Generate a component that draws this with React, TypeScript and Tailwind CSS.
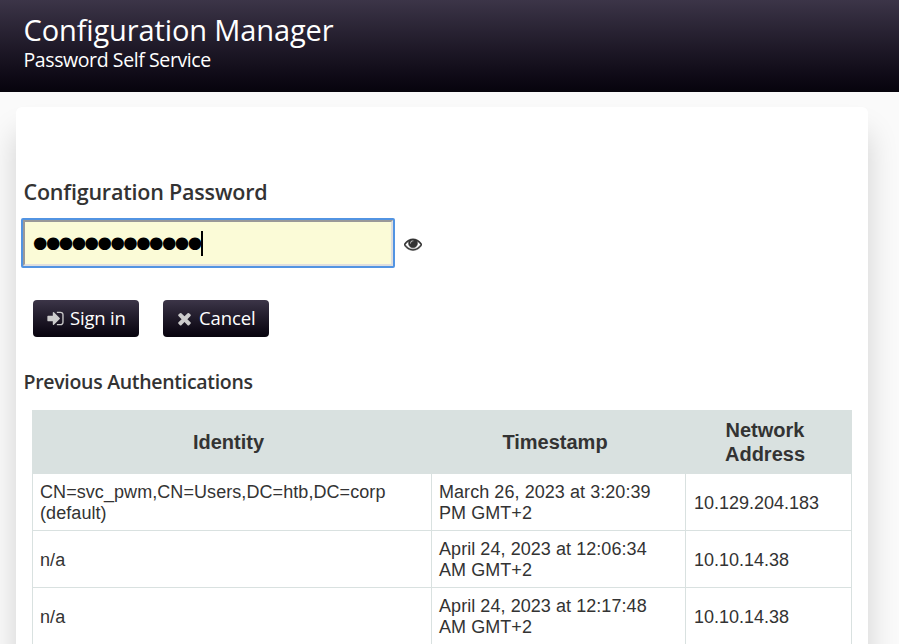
const rows = [
  { identity: ["CN=svc_pwm,CN=Users,DC=htb,DC=corp", "(default)"], time: ["March 26, 2023 at 3:20:39", "PM GMT+2"], address: "10.129.204.183" },
  { identity: ["n/a"], time: ["April 24, 2023 at 12:06:34", "AM GMT+2"], address: "10.10.14.38" },
  { identity: ["n/a"], time: ["April 24, 2023 at 12:17:48", "AM GMT+2"], address: "10.10.14.38" },
];

const signInPath =
  "M1312 896q0 26-19 45l-544 544q-19 19-45 19t-45-19-19-45v-288h-448q-26 0-45-19t-19-45v-384q0-26 19-45t45-19h448v-288q0-26 19-45t45-19 45 19l544 544q19 19 19 45zm352-352v704q0 119-84.5 203.5t-203.5 84.5h-320q-13 0-22.5-9.5t-9.5-22.5q0-4-1-20t-.5-26.5 3-23.5 10-19.5 20.5-6.5h320q66 0 113-47t47-113v-704q0-66-47-113t-113-47h-312l-11.5-1-11.5-3-8-5.5-7-9-2-13.5q0-4-1-20t-.5-26.5 3-23.5 10-19.5 20.5-6.5h320q119 0 203.5 84.5t84.5 203.5z";
const timesPath =
  "M1490 1322q0 40-28 68l-136 136q-28 28-68 28t-68-28l-294-294-294 294q-28 28-68 28t-68-28l-136-136q-28-28-28-68t28-68l294-294-294-294q-28-28-28-68t28-68l136-136q28-28 68-28t68 28l294 294 294-294q28-28 68-28t68 28l136 136q28 28 28 68t-28 68l-294 294 294 294q28 28 28 68z";
const eyePath =
  "M1664 960q-152-236-381-353 61 104 61 225 0 185-131.5 316.5t-316.5 131.5-316.5-131.5-131.5-316.5q0-121 61-225-229 117-381 353 133 205 333.5 326.5t434.5 121.5 434.5-121.5 333.5-326.5zm-720-384q0-20-14-34t-34-14q-125 0-214.5 89.5t-89.5 214.5q0 20 14 34t34 14 34-14 14-34q0-86 61-147t147-61q20 0 34-14t14-34zm848 384q0 34-20 69-140 230-376.5 368.5t-499.5 138.5-499.5-139-376.5-368q-20-35-20-69t20-69q140-229 376.5-368t499.5-139 499.5 139 376.5 368q20 35 20 69z";

function Icon({ path, className }: { path: string; className: string }) {
  return (
    <svg viewBox="0 0 1792 1792" className={className} fill="currentColor">
      <path d={path} />
    </svg>
  );
}

function Lines({ lines }: { lines: string[] }) {
  return (
    <>
      {lines.map((line) => (
        <span key={line} className="block whitespace-nowrap">{line}</span>
      ))}
    </>
  );
}

export default function App() {
  return (
    <div className="flex h-[644px] w-[899px] flex-col overflow-hidden bg-[#fafafa] font-['Trebuchet_MS','Open_Sans',sans-serif] text-[#333]">
      <header className="h-[92px] shrink-0 bg-linear-to-b from-[#3c3548] to-[#07040d] pt-3 pl-[23.5px] text-white">
        <h1 className="h-9 text-[29px] leading-9 tracking-[-0.12px] whitespace-nowrap">Configuration Manager</h1>
        <p className="h-6 text-[19.5px] leading-6 tracking-[-0.4px] whitespace-nowrap">Password Self Service</p>
      </header>
      <main className="mt-[15px] ml-4 h-[700px] w-[852px] shrink-0 rounded-md bg-white pt-[70px] shadow-[0_26px_30px_rgba(0,0,0,0.17)]">
        <h2 className="h-[30px] pl-[7.5px] text-[21.5px] leading-[30px] font-semibold tracking-[-0.2px] whitespace-nowrap">Configuration Password</h2>
        <div className="mt-[11px] ml-[5px] flex items-center">
          <div className="h-[50px] w-[374px] rounded-[2px] border-2 border-[#5294e2]">
            <div className="flex h-full items-center border-2 border-t-[#999] border-r-[#dedede] border-b-[#dedede] border-l-[#999] bg-[#fbfbd7] pl-[8px] text-black">
              <span className="font-['DejaVu_Sans',sans-serif] text-[16.5px] leading-none tracking-[-1.5px]">●●●●●●●●●●●●●</span>
              <span className="h-[25px] w-[2px] bg-black" />
            </div>
          </div>
          <Icon path={eyePath} className="mt-px ml-[9px] size-[18px] stroke-current stroke-[50]" />
        </div>
        <div className="mt-8 ml-[17px] flex gap-6">
          <button className="flex h-[37px] w-[106px] items-center rounded-[4px] bg-linear-to-b from-[#3c3548] to-[#07040d] pb-[2px] pl-[13px] text-[18.5px] text-white">
            <Icon path={signInPath} className="mt-px size-[19px] shrink-0 text-[#ccc]" />
            <span className="ml-[5px] tracking-[-0.2px] whitespace-nowrap">Sign in</span>
          </button>
          <button className="flex h-[37px] w-[106px] items-center rounded-[4px] bg-linear-to-b from-[#3c3548] to-[#07040d] pb-[2px] pl-3 text-[18.5px] text-white">
            <Icon path={timesPath} className="mt-px size-[19px] shrink-0 text-[#ccc]" />
            <span className="ml-[5px] tracking-[-0.1px] whitespace-nowrap">Cancel</span>
          </button>
        </div>
        <h3 className="mt-[30px] h-[30px] pl-[7.5px] text-[19.5px] leading-[30px] font-semibold tracking-[-0.3px] whitespace-nowrap">Previous Authentications</h3>
        <table className="mt-[13px] ml-4 w-[820px] table-fixed border-collapse font-['Liberation_Sans',Arial,sans-serif]">
          <colgroup>
            <col className="w-[399px]" />
            <col className="w-[254px]" />
            <col className="w-[166px]" />
          </colgroup>
          <thead>
            <tr className="h-[63px] bg-[#d9e1e0] text-[20px] leading-6">
              <th className="border border-[#d9e1e0] pr-[7px]">Identity</th>
              <th className="border border-[#d9e1e0] pr-[7px]">Timestamp</th>
              <th className="border border-[#d9e1e0] pr-[7px]">Network<br />Address</th>
            </tr>
          </thead>
          <tbody className="text-[18px] leading-[21px]">
            {rows.map((row) => (
              <tr key={row.time[0]} className="h-[57px]">
                <td className="border border-[#d9e1e0] pt-[2px] pl-[7px] tracking-[0.07px]"><Lines lines={row.identity} /></td>
                <td className="border border-[#d9e1e0] pt-[2px] pl-[7px] tracking-[0.06px]"><Lines lines={row.time} /></td>
                <td className="border border-[#d9e1e0] pt-[2px] pl-2">{row.address}</td>
              </tr>
            ))}
          </tbody>
        </table>
      </main>
    </div>
  );
}
